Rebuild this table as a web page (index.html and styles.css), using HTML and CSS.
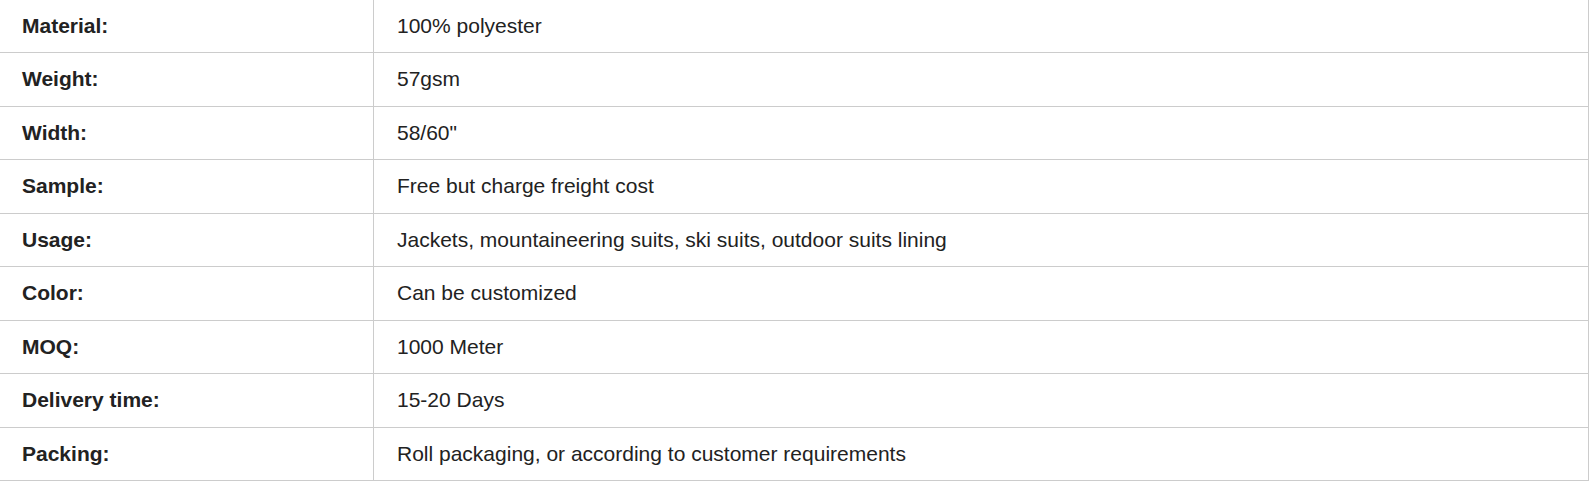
FILE: index.html
```html
<!DOCTYPE html>
<html>
<head>
<meta charset="utf-8">
<link rel="stylesheet" href="styles.css">
</head>
<body>
<table class="spec">
  <tbody>
    <tr><td class="label">Material:</td><td class="value">100% polyester</td></tr>
    <tr><td class="label">Weight:</td><td class="value">57gsm</td></tr>
    <tr><td class="label">Width:</td><td class="value">58/60"</td></tr>
    <tr><td class="label">Sample:</td><td class="value">Free but charge freight cost</td></tr>
    <tr><td class="label">Usage:</td><td class="value">Jackets, mountaineering suits, ski suits, outdoor suits lining</td></tr>
    <tr><td class="label">Color:</td><td class="value">Can be customized</td></tr>
    <tr><td class="label">MOQ:</td><td class="value">1000 Meter</td></tr>
    <tr><td class="label">Delivery time:</td><td class="value">15-20 Days</td></tr>
    <tr><td class="label">Packing:</td><td class="value">Roll packaging, or according to customer requirements</td></tr>
  </tbody>
</table>
</body>
</html>
```
FILE: styles.css
```css
html, body {
  margin: 0;
  padding: 0;
  background: #ffffff;
}
body {
  font-family: "Liberation Sans", Arial, sans-serif;
  color: #222222;
  font-size: 21px;
}
.spec {
  border-collapse: collapse;
  width: 1589px;
  margin-top: -1.5px;
  table-layout: fixed;
}
.spec td {
  height: 52.5px;
  padding: 0 22px;
  border-top: 1px solid #cccccc;
  border-bottom: 1px solid #cccccc;
  vertical-align: middle;
  line-height: 24px;
}
.spec td.label {
  width: 329px;
  font-weight: bold;
  border-right: 1px solid #cccccc;
  padding-left: 22px;
}
.spec td.value {
  border-right: 1px solid #cccccc;
  padding-left: 23px;
}
```
